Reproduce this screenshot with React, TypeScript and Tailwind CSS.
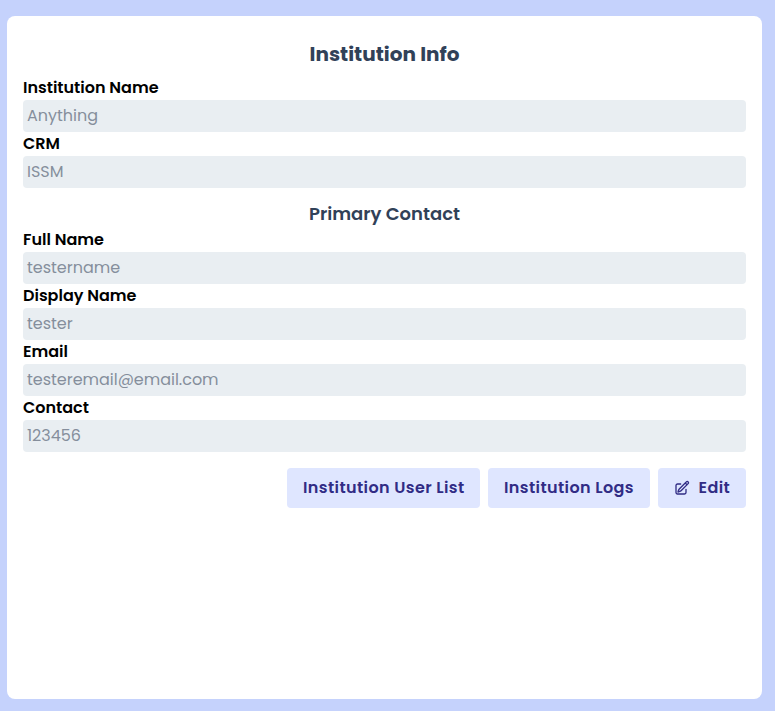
type FieldProps = { label: string; value: string };

const institution: FieldProps[] = [
  { label: 'Institution Name', value: 'Anything' },
  { label: 'CRM', value: 'ISSM' },
];

const contact: FieldProps[] = [
  { label: 'Full Name', value: 'testername' },
  { label: 'Display Name', value: 'tester' },
  { label: 'Email', value: 'testeremail@email.com' },
  { label: 'Contact', value: '123456' },
];

function Field({ label, value }: FieldProps) {
  return (
    <div>
      <p className="font-semibold tracking-[-0.01px] text-black">{label}</p>
      <p className="h-8 rounded bg-[#e9eef2] px-1 leading-8 tracking-[-0.02px] text-[#858e9c]">{value}</p>
    </div>
  );
}

function EditIcon() {
  return (
    <svg className="h-4 w-4" viewBox="0 0 24 24" fill="none" stroke="currentColor" strokeWidth="2" strokeLinecap="round" strokeLinejoin="round">
      <path d="m16.862 4.487 1.687-1.688a1.875 1.875 0 1 1 2.652 2.652L10.582 16.07a4.5 4.5 0 0 1-1.897 1.13L6 18l.8-2.685a4.5 4.5 0 0 1 1.13-1.897l8.932-8.931Zm0 0L19.5 7.125M18 14v4.75A2.25 2.25 0 0 1 15.75 21H5.25A2.25 2.25 0 0 1 3 18.75V8.25A2.25 2.25 0 0 1 5.25 6H10" />
    </svg>
  );
}

export default function App() {
  return (
    <main className="h-[711px] bg-[#c5d2fc] pt-4 pr-[13px] pb-3 pl-[7px] font-[Poppins,sans-serif]">
      <section className="h-full rounded-lg bg-white px-4 pt-6">
        <h1 className="text-center text-xl leading-7 font-bold text-[#314158]">Institution Info</h1>
        <div className="mt-2">
          {institution.map((f) => <Field key={f.label} {...f} />)}
        </div>
        <h2 className="mt-3 text-center text-lg leading-7 font-semibold text-[#314158]">Primary Contact</h2>
        <div>
          {contact.map((f) => <Field key={f.label} {...f} />)}
        </div>
        <div className="mt-4 flex justify-end gap-2 font-semibold tracking-wide whitespace-nowrap text-[#312c85]">
          <button className="flex h-10 w-[193px] items-center rounded bg-[#dfe6ff] pl-4">Institution User List</button>
          <button className="flex h-10 w-[162px] items-center rounded bg-[#dfe6ff] pl-4">Institution Logs</button>
          <button className="flex h-10 w-[88px] items-center gap-[8.5px] rounded bg-[#dfe6ff] pl-4">
            <EditIcon />
            Edit
          </button>
        </div>
      </section>
    </main>
  );
}
